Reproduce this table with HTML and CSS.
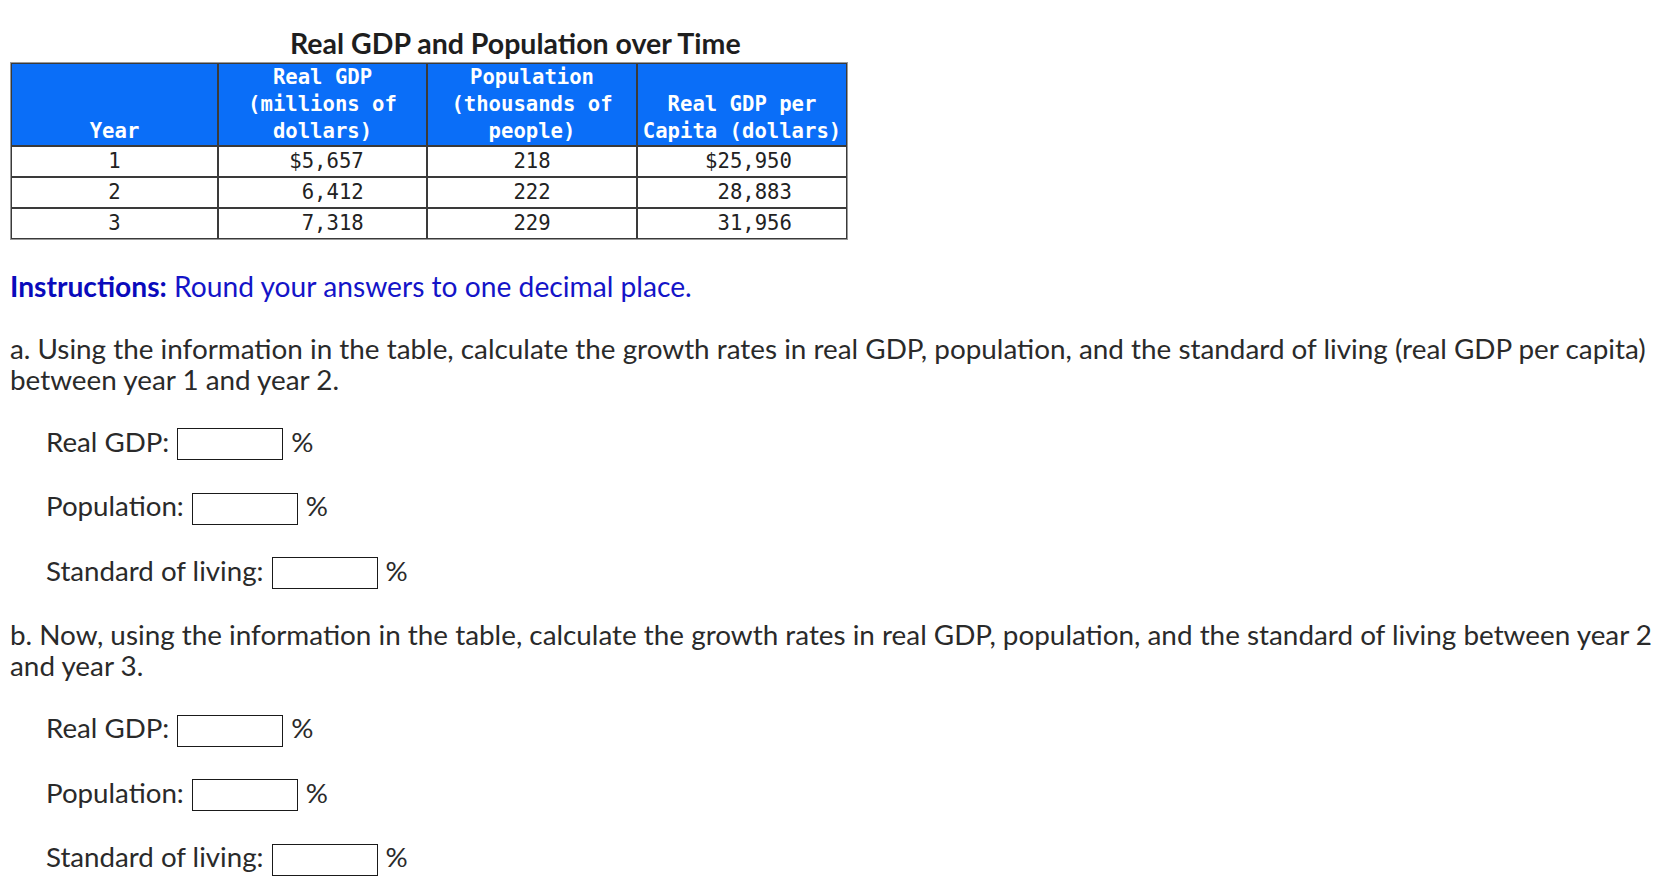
FILE: index.html
```html
<!DOCTYPE html>
<html lang="en">
<head>
<meta charset="utf-8">
<title>Real GDP and Population over Time</title>
<link rel="stylesheet" href="styles.css">
</head>
<body>
<main class="page">
  <div class="title">Real GDP and Population over Time</div>
  <table class="data">
    <colgroup><col class="c1"><col class="c2"><col class="c3"><col class="c4"></colgroup>
    <thead>
      <tr><th>Year</th><th>Real GDP<br>(millions of<br>dollars)</th><th>Population<br>(thousands of<br>people)</th><th>Real GDP per<br>Capita (dollars)</th></tr>
    </thead>
    <tbody>
      <tr><td>1</td><td class="gdp">$5,657</td><td>218</td><td class="pc">$25,950</td></tr>
      <tr><td>2</td><td class="gdp">&nbsp;6,412</td><td>222</td><td class="pc">&nbsp;28,883</td></tr>
      <tr><td>3</td><td class="gdp">&nbsp;7,318</td><td>229</td><td class="pc">&nbsp;31,956</td></tr>
    </tbody>
  </table>
  <p class="instructions"><strong>Instructions:</strong> Round your answers to one decimal place.</p>
  <p class="question">a. Using the information in the table, calculate the growth rates in real GDP, population, and the standard of living (real GDP per capita) between year 1 and year 2.</p>
  <div class="answers">
    <div class="answer"><span class="label">Real GDP:</span><input class="box" type="text" aria-label="Real GDP a"><span class="pct">%</span></div>
    <div class="answer"><span class="label">Population:</span><input class="box" type="text" aria-label="Population a"><span class="pct">%</span></div>
    <div class="answer"><span class="label">Standard of living:</span><input class="box" type="text" aria-label="Standard of living a"><span class="pct">%</span></div>
  </div>
  <p class="question">b. Now, using the information in the table, calculate the growth rates in real GDP, population, and the standard of living between year 2 and year 3.</p>
  <div class="answers">
    <div class="answer"><span class="label">Real GDP:</span><input class="box" type="text" aria-label="Real GDP b"><span class="pct">%</span></div>
    <div class="answer"><span class="label">Population:</span><input class="box" type="text" aria-label="Population b"><span class="pct">%</span></div>
    <div class="answer"><span class="label">Standard of living:</span><input class="box" type="text" aria-label="Standard of living b"><span class="pct">%</span></div>
  </div>
</main>
</body>
</html>
```

FILE: styles.css
```css
html, body {
  margin: 0;
  padding: 0;
  background: #ffffff;
}
body {
  font-family: Lato, "Noto Sans", Arial, sans-serif;
  color: #2a2a2a;
}
.page {
  padding: 24px 4px 0 10px;
}
.title {
  font-weight: 700;
  font-size: 28.5px;
  line-height: 38px;
  color: #1e1e1e;
  padding-left: 280px;
}
.data {
  table-layout: fixed;
  width: 838px;
  border: 1px solid #9a9a9a;
  border-collapse: separate;
  border-spacing: 0;
  font-family: "DejaVu Sans Mono", "Liberation Mono", monospace;
  font-size: 20.6px;
}
.c1 { width: 207px; }
.c2 { width: 209px; }
.c3 { width: 210px; }
.c4 { width: 210px; }
.data th, .data td {
  border: 1px solid #3a3a3a;
  text-align: center;
  padding: 0;
}
.data th {
  background: #0a6ef8;
  color: #ffffff;
  font-weight: 700;
  line-height: 27px;
  vertical-align: bottom;
}
.data td {
  color: #222222;
  line-height: 27px;
  padding: 1px 0;
}
.data td.gdp { padding-left: 8px; }
.data td.pc { padding-left: 13px; }
.instructions {
  margin: 30.5px 0 0 0;
  font-size: 28.2px;
  line-height: 31px;
  color: #1414c8;
}
.instructions strong {
  font-weight: 700;
  color: #0a0abb;
}
.question {
  margin: 31px 0 0 0;
  font-size: 27.85px;
  line-height: 31px;
}
.answers + .question {
  margin-top: 30px;
}
.answers {
  padding-left: 36px;
}
.answer {
  display: flex;
  align-items: center;
  height: 32px;
  margin-top: 32.5px;
  font-size: 27.7px;
}
.answer:first-child {
  margin-top: 33.5px;
}
.label, .pct {
  padding-bottom: 6px;
}
.box {
  box-sizing: border-box;
  width: 106px;
  height: 32px;
  margin: 0 8px;
  border: 1px solid #1a1a1a;
  border-radius: 0;
  padding: 0 4px;
  background: #fff;
  font: inherit;
}
```
